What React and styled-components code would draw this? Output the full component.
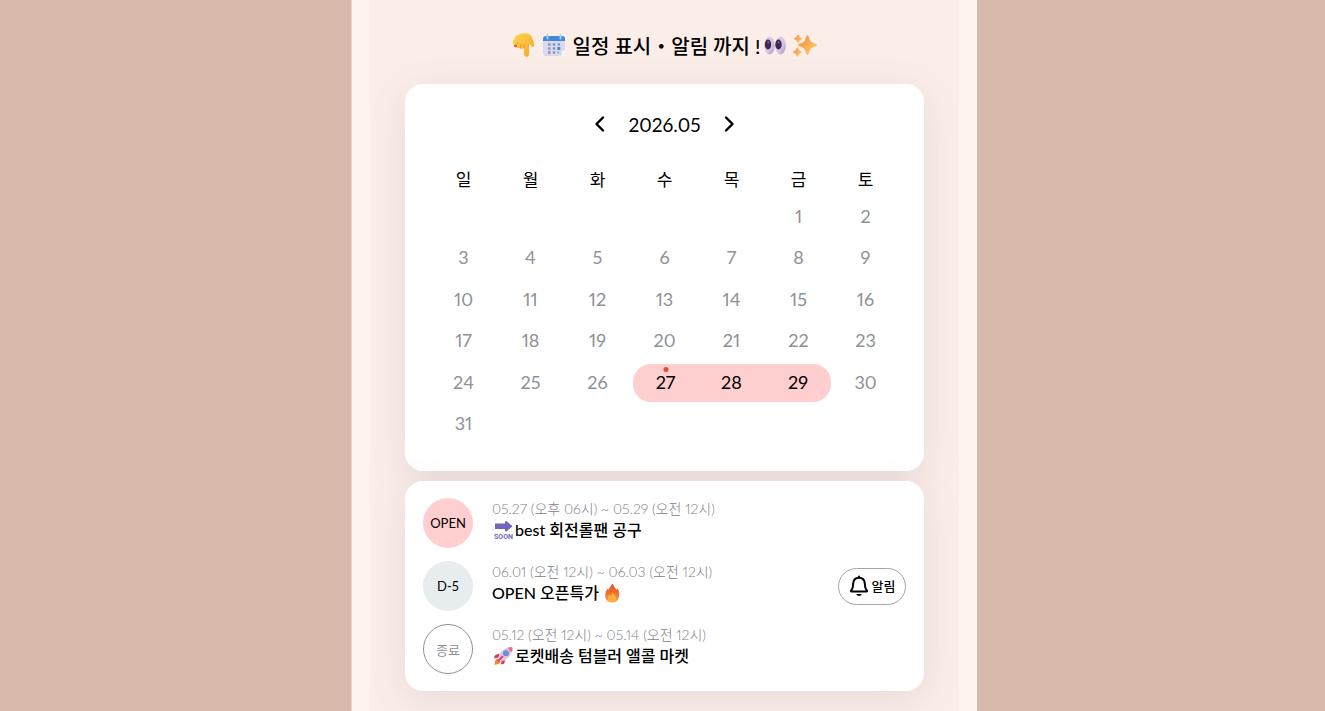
import { useId } from "react";
import styled, { createGlobalStyle } from "styled-components";

const GlobalStyle = createGlobalStyle`
  * {
    box-sizing: border-box;
  }

  body {
    margin: 0;
    background: #d7b9ab;
    color: #000;
    font-family: Lato, "Noto Sans CJK KR", sans-serif;
    font-variant-numeric: proportional-nums;
  }

  button {
    font-family: inherit;
    color: inherit;
    cursor: pointer;
  }
`;

const Page = styled.div`
  display: flex;
  justify-content: center;
  min-height: 100vh;
  padding-left: 3px;
`;

const Main = styled.main`
  width: 100%;
  max-width: 626px;
  padding: 0 18px;
  background: #fdf4f0;
  border-left: 1px solid #e8d3c9;
  overflow: hidden;
`;

const Content = styled.div`
  display: flex;
  flex-direction: column;
  gap: 10px;
  min-height: 100vh;
  padding: 29px 35px 20px;
  background: #fbeee9;
`;

const Title = styled.h1`
  display: flex;
  justify-content: center;
  align-items: center;
  gap: 7px;
  height: 32px;
  margin: 0 0 13px;
  font-size: 20px;
  font-weight: 500;
  white-space: nowrap;
`;

const TitleText = styled.span`
  display: flex;
  align-items: center;
  gap: 4px;
`;

const Card = styled.section`
  background: #fff;
  border-radius: 18px;
  box-shadow: 0 8px 36px rgba(100, 75, 90, 0.13);
`;

const CalendarCard = styled(Card)`
  padding: 24px 25px 26px;
`;

const MonthBar = styled.div`
  display: flex;
  justify-content: center;
  align-items: center;
  gap: 20px;
  height: 32px;
  margin-bottom: 23px;
`;

const Month = styled.h2`
  margin: 0;
  font-size: 19px;
  font-weight: 400;
`;

const ArrowButton = styled.button`
  display: flex;
  padding: 0;
  border: 0;
  background: none;
`;

const Calendar = styled.table`
  width: 100%;
  height: 282px;
  table-layout: fixed;
  border-collapse: collapse;
  text-align: center;
`;

const Weekday = styled.th`
  height: 33px;
  padding: 0;
  font-size: 17px;
  line-height: 24px;
  font-weight: 400;
`;

const DayCell = styled.td`
  height: 41px;
  padding: 0;
`;

const Day = styled.span`
  position: relative;
  display: block;
  height: 38px;
  line-height: 37px;
  font-size: 18px;
  color: ${({ $active }) => ($active ? "#000" : "#8e9196")};
  background: ${({ $active }) => ($active ? "#ffcfd0" : "none")};
  margin-left: ${({ $first }) => ($first ? "2px" : "0")};
  margin-right: ${({ $last }) => ($last ? "1px" : "0")};
  border-radius: ${({ $first, $last }) =>
    $first ? "18px 0 0 18px" : $last ? "0 18px 18px 0" : "0"};
`;

const Today = styled.i`
  position: absolute;
  top: 3px;
  left: 50%;
  width: 5px;
  height: 5px;
  border-radius: 50%;
  background: #e24a33;
  transform: translateX(-50%);
`;

const EventCard = styled(Card)`
  padding: 17px 18px;
`;

const EventList = styled.ul`
  display: flex;
  flex-direction: column;
  gap: 13px;
  margin: 0;
  padding: 0;
  list-style: none;
`;

const EventItem = styled.li`
  display: flex;
  align-items: flex-start;
  gap: 19px;
`;

const statusColors = {
  open: "background: #ffcfd0; border-color: #ffcfd0;",
  soon: "background: #e7ecef; border-color: #e7ecef;",
  end: "background: #fff; border-color: #8e9196; color: #8e9196;",
};

const Status = styled.span`
  display: flex;
  flex: none;
  justify-content: center;
  align-items: center;
  width: 50px;
  height: 50px;
  border: 1px solid;
  border-radius: 50%;
  font-size: 13px;
  ${({ $type }) => statusColors[$type]}
`;

const EventInfo = styled.div`
  flex: 1;
  min-width: 0;
`;

const EventDate = styled.p`
  margin: 0;
  font-size: 14px;
  font-weight: 300;
  line-height: 21px;
  color: #7d8086;
`;

const EventTitle = styled.h3`
  display: flex;
  align-items: center;
  gap: 1px;
  margin: 0;
  font-size: 16px;
  line-height: 22px;
  font-weight: 500;
`;

const AlarmButton = styled.button`
  display: flex;
  flex: none;
  align-self: center;
  justify-content: center;
  align-items: center;
  gap: 3px;
  width: 68px;
  height: 37px;
  padding: 0;
  border: 1px solid #a5a5a5;
  border-radius: 19px;
  background: #fff;
  font-size: 13px;
  line-height: 16px;
  font-weight: 500;
`;

const HandIcon = () => {
  const id = useId();
  return (
    <svg width="23" height="26" viewBox="0 0 23 26" aria-hidden="true">
      <defs>
        <linearGradient id={id} x1="0" y1="0" x2="1" y2="1">
          <stop offset="0" stopColor="#ffd84a" />
          <stop offset="1" stopColor="#f5a22f" />
        </linearGradient>
      </defs>
      <path
        d="M7 2.500C9 1 14 .8 17 2c2.500 1 3 3 3.500 5l1.800 5c.7 2-1 3.500-2.700 2.500L17 11.500V22c0 3.800-5 3.800-5 0v-6c-1.500 1.500-3.500 1.200-4.200 0-1.600.7-3.500.2-3.800-1.500C2 14.500 1 13 1.500 11.500 0 10 1 8 2.200 7.500 2.500 5 4.500 3.500 7 2.500Z"
        fill={`url(#${id})`}
      />
      <path
        d="M5.500 11c-.6 1-.8 2-.8 3M9 12c-.6 1-.8 2.500-.6 4M12 13v3"
        fill="none"
        stroke="#ef8d35"
        strokeWidth=".9"
        strokeLinecap="round"
      />
      <ellipse cx="3.500" cy="14" rx="1.600" ry="1.200" fill="#e8402f" opacity=".8" />
    </svg>
  );
};

const CalendarIcon = () => (
  <svg width="24" height="24" viewBox="0 0 24 24" aria-hidden="true">
    <rect x="1" y="3" width="22" height="20" rx="3" fill="#d9daf0" />
    <path d="M1 8V6a3 3 0 0 1 3-3h16a3 3 0 0 1 3 3v2Z" fill="#4489d7" />
    <path d="M23 17v3a3 3 0 0 1-3 3h-3c3 0 3-1 3-3 0-2 1-3 3-3Z" fill="#f7f5ff" />
    <path d="M5.500 1.500v4M18.500 1.500v4" stroke="#a9d7f7" strokeWidth="1.800" strokeLinecap="round" />
    <path
      d="M6 11.500h2.500M10.800 11.500h2.500M15.600 11.500h2.500M6 15.500h2.500M10.800 15.500h2.500M6 19.500h2.500M10.800 19.500h2.500"
      stroke="#9093b5"
      strokeWidth="2.300"
    />
    <path d="M15.300 15.500h3" stroke="#3d8fe5" strokeWidth="3" />
    <path d="M15.600 19.500h1.500" stroke="#9093b5" strokeWidth="1.800" />
  </svg>
);

const EyesIcon = () => {
  const id = useId();
  return (
    <svg width="22" height="19" viewBox="0 0 22 19" aria-hidden="true">
      <defs>
        <linearGradient id={id} x1="0" y1="0" x2="1" y2="1">
          <stop offset="0" stopColor="#ddd2e8" />
          <stop offset=".6" stopColor="#d3c4e4" />
          <stop offset="1" stopColor="#a888cb" />
        </linearGradient>
      </defs>
      <ellipse cx="5.500" cy="9.500" rx="5.300" ry="9" fill={`url(#${id})`} />
      <ellipse cx="16.500" cy="9.500" rx="5.300" ry="9" fill={`url(#${id})`} />
      <ellipse cx="4" cy="8.500" rx="3.200" ry="5" fill="#3c2850" />
      <ellipse cx="14.500" cy="8.500" rx="3.200" ry="5" fill="#3c2850" />
      <ellipse cx="4.200" cy="6.300" rx=".8" ry="1.100" fill="#8e77a8" />
      <ellipse cx="14.700" cy="6.300" rx=".8" ry="1.100" fill="#8e77a8" />
    </svg>
  );
};

const SparklesIcon = () => {
  const id = useId();
  return (
    <svg width="24" height="23" viewBox="0 0 24 23" aria-hidden="true">
      <defs>
        <linearGradient id={id} x1="0" y1="0" x2="1" y2="1">
          <stop offset="0" stopColor="#f48450" />
          <stop offset=".5" stopColor="#fcac50" />
          <stop offset="1" stopColor="#ffd45e" />
        </linearGradient>
      </defs>
      <g fill={`url(#${id})`} stroke={`url(#${id})`} strokeWidth=".6">
        <path d="M13.500 2.500c.4-1.500 1.600-1.500 2 0 1 4.500 2.500 6.500 7 7.500 1.500.4 1.500 1.600 0 2-4.500 1-6 3-7 7.500-.4 1.500-1.600 1.500-2 0-1-4.500-2.500-6.500-7-7.500-1.500-.4-1.500-1.600 0-2 4.500-1 6-3 7-7.500Z" />
        <path d="M4.500 1.500c.3-.8.900-.8 1.200 0 .5 1.700 1 2.200 2.600 2.800.8.200.8.800 0 1-1.600.6-2.100 1.100-2.600 2.800-.3.800-.9.800-1.200 0C4 6.400 3.500 5.900 1.900 5.300c-.8-.2-.8-.8 0-1C3.500 3.700 4 3.200 4.500 1.500Z" />
        <path d="M3.700 14.500c.3-1 1-1 1.300 0 .5 1.900 1.100 2.400 2.900 3 .9.300.9.900 0 1.200-1.800.6-2.400 1.100-2.900 3-.3 1-1 1-1.300 0-.5-1.900-1.100-2.400-2.900-3-.9-.3-.9-.9 0-1.200 1.800-.6 2.400-1.100 2.900-3Z" />
      </g>
    </svg>
  );
};

const SoonIcon = () => (
  <svg width="22" height="20" viewBox="0 0 22 20" aria-hidden="true">
    <path d="M3 3.500h10V2.100c0-1 .8-1.300 1.500-.8l5.300 4.200c.6.500.6 1.100 0 1.600l-5.300 4.200c-.7.500-1.500.2-1.500-.8V9H3Z" fill="#7465bd" />
    <text
      x="11.500"
      y="19"
      textAnchor="middle"
      fontFamily="Roboto, sans-serif"
      fontSize="7"
      fontWeight="700"
      fill="#7465bd"
    >
      SOON
    </text>
  </svg>
);

const RocketIcon = () => (
  <svg width="22" height="20" viewBox="0 0 22 20" aria-hidden="true">
    <path d="M7.500 7.500 3.500 9c-1.200.7-1.400 2.200-1 3.500l4-1ZM13 12.500l-.5 4.500c-.7 1.200-2 1.500-3.500 1.200l.5-4Z" fill="#e62f67" />
    <path d="M5.500 12.500c-2 .7-3 3-3 6.300 3.500-.1 5.500-1 6-3.300Z" fill="#f28b32" />
    <path d="M7 10.500C8 6 12 1.500 19.500 1.200c.7 0 1 .3 1 1C20.300 9 15.500 13.500 10.500 15c-1.500.4-4-2.500-3.500-4.500Z" fill="#d5c9e5" />
    <path d="M15.800 1.600c1.200-.3 2.500-.4 3.700-.4.700 0 1 .3 1 1 0 1.300-.2 2.500-.6 3.600-1.900-.6-3.500-2.100-4.100-4.200Z" fill="#f06a90" />
    <circle cx="14" cy="7.200" r="2.900" fill="#8b80b0" />
    <circle cx="14" cy="7.200" r="1.900" fill="#4a9fe6" />
    <path d="m10.500 10.700-4 4" stroke="#e62f67" strokeWidth="1.800" strokeLinecap="round" />
  </svg>
);

const FireIcon = () => {
  const id = useId();
  return (
    <svg width="24" height="20" viewBox="0 0 24 20" aria-hidden="true">
      <defs>
        <linearGradient id={id} x1="0" y1="0" x2="0" y2="1">
          <stop offset="0" stopColor="#e94b2c" />
          <stop offset=".6" stopColor="#f47a2f" />
          <stop offset="1" stopColor="#fba838" />
        </linearGradient>
      </defs>
      <path
        d="M11.500 1.800c.6-1.200 1.500-1.200 1.800 0 .6 2.300 2 3.200 3.200 5 .5-.6.5-1.500 1.200-1 1 1.200 1.500 3.500 1.500 5.700 0 5-2.700 8-7 8s-7-3-7-7c0-3.500 1.300-5 2-6.300.5-.6 1-.3 1.200.5C9.500 5 10.500 3.500 11.500 1.800Z"
        fill={`url(#${id})`}
      />
      <path d="M12.500 9c.8 2 3.500 3 3.500 6 0 2.500-1.500 4.200-3.800 4.200S8 17.500 8 15c0-1.800.8-2.800 1.500-3.500.7.7 1 1.300 1.200 1.700.8-1 1.300-2.400 1.800-4.200Z" fill="#ffae40" />
    </svg>
  );
};

const BellIcon = () => (
  <svg width="20" height="22" viewBox="0 0 20 22" aria-hidden="true">
    <path
      d="M10 2.800c-3.500 0-5.500 2.300-5.800 5.500l-.4 3.700c-.1 1.300-.8 2.300-1.600 3.300-.5.700-.3 1.200.5 1.200h14.600c.8 0 1-.5.500-1.200-.8-1-1.500-2-1.600-3.300l-.4-3.700c-.3-3.200-2.300-5.500-5.800-5.500ZM10 1.500v1"
      fill="none"
      stroke="#000"
      strokeWidth="2"
      strokeLinecap="round"
      strokeLinejoin="round"
    />
    <path d="M7.200 19h5.600c-.5 1.300-1.500 1.900-2.800 1.900S7.700 20.300 7.200 19Z" fill="#000" />
  </svg>
);

const Chevron = ({ d }) => (
  <svg width="18" height="18" viewBox="0 0 18 18" aria-hidden="true">
    <path d={d} fill="none" stroke="#000" strokeWidth="2.400" strokeLinecap="round" strokeLinejoin="round" />
  </svg>
);

const weekdays = ["일", "월", "화", "수", "목", "금", "토"];

// May 2026 starts on a Friday
const weeks = Array.from({ length: 6 }, (_, week) =>
  weekdays.map((_, i) => {
    const day = week * 7 + i - 4;
    return day > 0 && day <= 31 ? day : null;
  })
);

const sale = { start: 27, end: 29 };

const events = [
  {
    type: "open",
    status: "OPEN",
    date: "05.27 (오후 06시) ~ 05.29 (오전 12시)",
    before: <SoonIcon />,
    title: "best 회전롤팬 공구",
  },
  {
    type: "soon",
    status: "D-5",
    date: "06.01 (오전 12시) ~ 06.03 (오전 12시)",
    title: "OPEN 오픈특가",
    after: <FireIcon />,
    alarm: true,
  },
  {
    type: "end",
    status: "종료",
    date: "05.12 (오전 12시) ~ 05.14 (오전 12시)",
    before: <RocketIcon />,
    title: "로켓배송 텀블러 앨콜 마켓",
  },
];

const App = () => {
  return (
    <Page>
      <GlobalStyle />
      <Main>
        <Content>
          <Title>
            <HandIcon />
            <CalendarIcon />
            <TitleText>
              일정 표시・알림 까지 !
              <EyesIcon />
            </TitleText>
            <SparklesIcon />
          </Title>
          <CalendarCard>
            <MonthBar>
              <ArrowButton aria-label="이전 달">
                <Chevron d="M12 2.500 5.500 9l6.500 6.500" />
              </ArrowButton>
              <Month>2026.05</Month>
              <ArrowButton aria-label="다음 달">
                <Chevron d="M6 2.500 12.500 9 6 15.500" />
              </ArrowButton>
            </MonthBar>
            <Calendar>
              <thead>
                <tr>
                  {weekdays.map((name) => (
                    <Weekday key={name} scope="col">
                      {name}
                    </Weekday>
                  ))}
                </tr>
              </thead>
              <tbody>
                {weeks.map((days, week) => (
                  <tr key={week}>
                    {days.map((day, i) => (
                      <DayCell key={i}>
                        {day && (
                          <Day
                            $active={day >= sale.start && day <= sale.end}
                            $first={day === sale.start}
                            $last={day === sale.end}
                          >
                            {day === sale.start && <Today />}
                            {day}
                          </Day>
                        )}
                      </DayCell>
                    ))}
                  </tr>
                ))}
              </tbody>
            </Calendar>
          </CalendarCard>
          <EventCard>
            <EventList>
              {events.map((event) => (
                <EventItem key={event.date}>
                  <Status $type={event.type}>{event.status}</Status>
                  <EventInfo>
                    <EventDate>{event.date}</EventDate>
                    <EventTitle>
                      {event.before}
                      {event.title}
                      {event.after}
                    </EventTitle>
                  </EventInfo>
                  {event.alarm && (
                    <AlarmButton>
                      <BellIcon />
                      알림
                    </AlarmButton>
                  )}
                </EventItem>
              ))}
            </EventList>
          </EventCard>
        </Content>
      </Main>
    </Page>
  );
};

export default App;
